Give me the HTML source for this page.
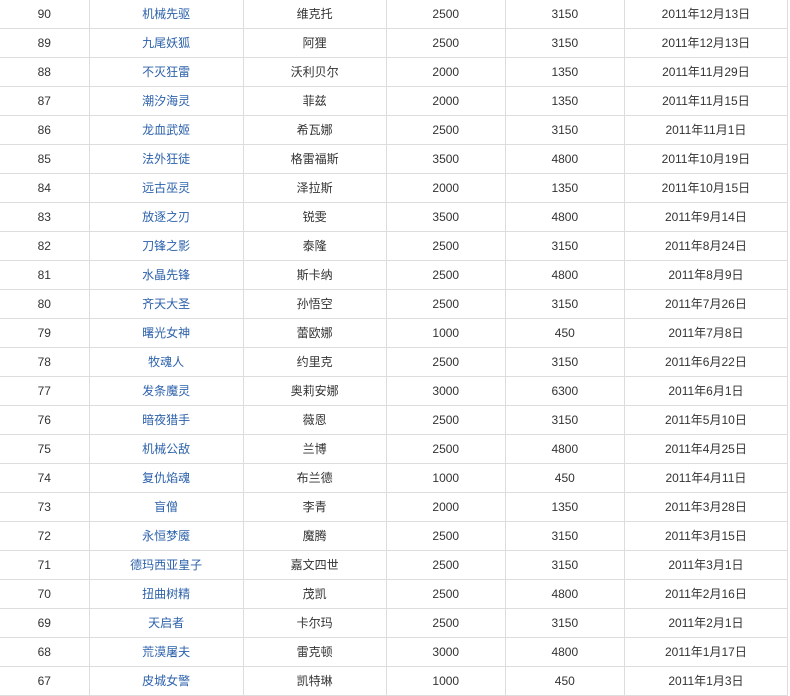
<!DOCTYPE html>
<html><head><meta charset="utf-8"><style>
body{margin:0;background:#fff;width:790px;height:689px;overflow:hidden;font-family:"Liberation Sans","Noto Sans CJK SC",sans-serif;font-size:12px;color:#333}
table{position:absolute;left:0;top:0;border-collapse:collapse;table-layout:fixed;width:788px}
td{height:28px;padding:0;border-bottom:1px solid #ddd;border-right:1px solid #ddd;text-align:center;vertical-align:middle;line-height:28px}
td.b{color:#2d62ab}
</style></head><body>
<table>
<colgroup><col style="width:89px"><col style="width:154px"><col style="width:143px"><col style="width:119px"><col style="width:119px"><col style="width:163px"></colgroup>
<tr><td>90</td><td class="b">机械先驱</td><td>维克托</td><td>2500</td><td>3150</td><td>2011年12月13日</td></tr>
<tr><td>89</td><td class="b">九尾妖狐</td><td>阿狸</td><td>2500</td><td>3150</td><td>2011年12月13日</td></tr>
<tr><td>88</td><td class="b">不灭狂雷</td><td>沃利贝尔</td><td>2000</td><td>1350</td><td>2011年11月29日</td></tr>
<tr><td>87</td><td class="b">潮汐海灵</td><td>菲兹</td><td>2000</td><td>1350</td><td>2011年11月15日</td></tr>
<tr><td>86</td><td class="b">龙血武姬</td><td>希瓦娜</td><td>2500</td><td>3150</td><td>2011年11月1日</td></tr>
<tr><td>85</td><td class="b">法外狂徒</td><td>格雷福斯</td><td>3500</td><td>4800</td><td>2011年10月19日</td></tr>
<tr><td>84</td><td class="b">远古巫灵</td><td>泽拉斯</td><td>2000</td><td>1350</td><td>2011年10月15日</td></tr>
<tr><td>83</td><td class="b">放逐之刃</td><td>锐雯</td><td>3500</td><td>4800</td><td>2011年9月14日</td></tr>
<tr><td>82</td><td class="b">刀锋之影</td><td>泰隆</td><td>2500</td><td>3150</td><td>2011年8月24日</td></tr>
<tr><td>81</td><td class="b">水晶先锋</td><td>斯卡纳</td><td>2500</td><td>4800</td><td>2011年8月9日</td></tr>
<tr><td>80</td><td class="b">齐天大圣</td><td>孙悟空</td><td>2500</td><td>3150</td><td>2011年7月26日</td></tr>
<tr><td>79</td><td class="b">曙光女神</td><td>蕾欧娜</td><td>1000</td><td>450</td><td>2011年7月8日</td></tr>
<tr><td>78</td><td class="b">牧魂人</td><td>约里克</td><td>2500</td><td>3150</td><td>2011年6月22日</td></tr>
<tr><td>77</td><td class="b">发条魔灵</td><td>奥莉安娜</td><td>3000</td><td>6300</td><td>2011年6月1日</td></tr>
<tr><td>76</td><td class="b">暗夜猎手</td><td>薇恩</td><td>2500</td><td>3150</td><td>2011年5月10日</td></tr>
<tr><td>75</td><td class="b">机械公敌</td><td>兰博</td><td>2500</td><td>4800</td><td>2011年4月25日</td></tr>
<tr><td>74</td><td class="b">复仇焰魂</td><td>布兰德</td><td>1000</td><td>450</td><td>2011年4月11日</td></tr>
<tr><td>73</td><td class="b">盲僧</td><td>李青</td><td>2000</td><td>1350</td><td>2011年3月28日</td></tr>
<tr><td>72</td><td class="b">永恒梦魇</td><td>魔腾</td><td>2500</td><td>3150</td><td>2011年3月15日</td></tr>
<tr><td>71</td><td class="b">德玛西亚皇子</td><td>嘉文四世</td><td>2500</td><td>3150</td><td>2011年3月1日</td></tr>
<tr><td>70</td><td class="b">扭曲树精</td><td>茂凯</td><td>2500</td><td>4800</td><td>2011年2月16日</td></tr>
<tr><td>69</td><td class="b">天启者</td><td>卡尔玛</td><td>2500</td><td>3150</td><td>2011年2月1日</td></tr>
<tr><td>68</td><td class="b">荒漠屠夫</td><td>雷克顿</td><td>3000</td><td>4800</td><td>2011年1月17日</td></tr>
<tr><td>67</td><td class="b">皮城女警</td><td>凯特琳</td><td>1000</td><td>450</td><td>2011年1月3日</td></tr>
</table>
</body></html>
